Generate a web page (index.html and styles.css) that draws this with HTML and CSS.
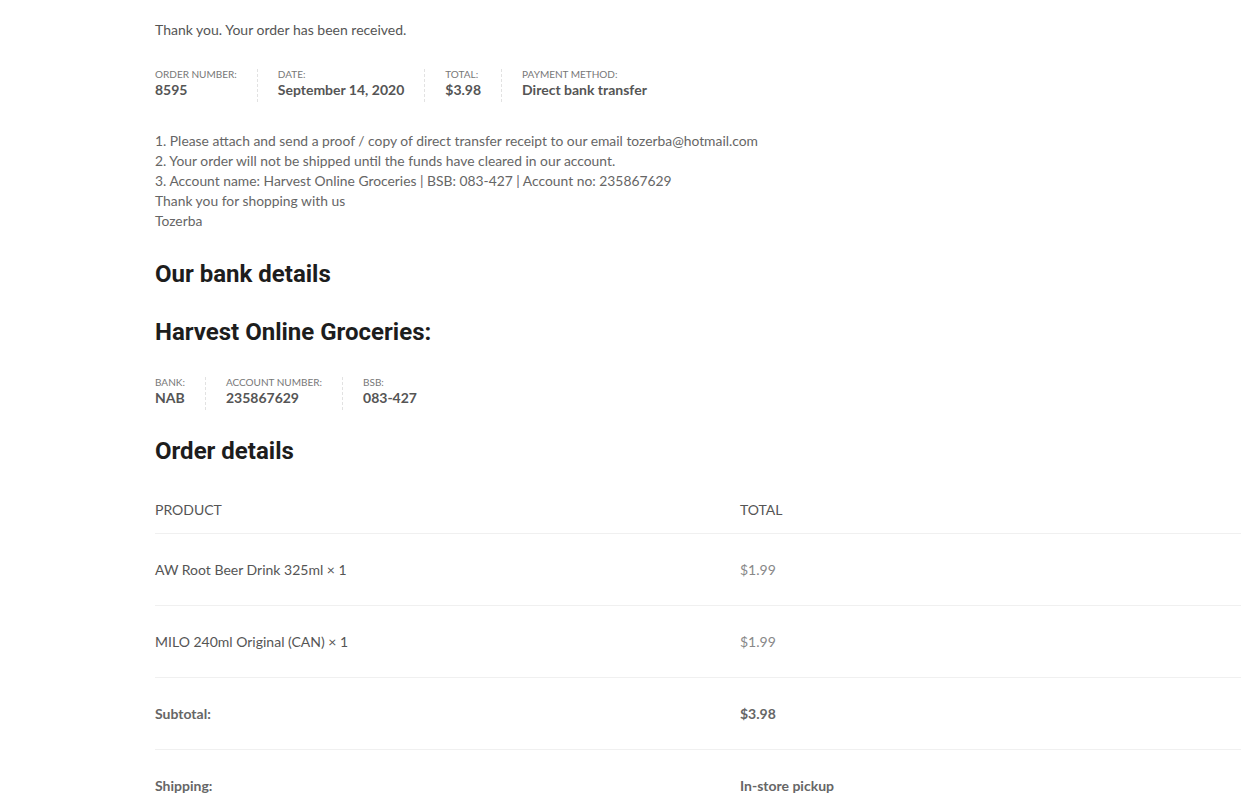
FILE: index.html
```html
<!DOCTYPE html>
<html lang="en">
<head>
    <meta charset="UTF-8">
    <meta name="viewport" content="width=device-width, initial-scale=1.0">
    <title>Order received</title>
    <link rel="stylesheet" href="styles.css">
</head>
<body>
    <div class="order-page">
        <p class="thanks">Thank you. Your order has been received.</p>

        <ul class="overview">
            <li>
                <span class="label">Order number:</span>
                <strong>8595</strong>
            </li>
            <li>
                <span class="label">Date:</span>
                <strong>September 14, 2020</strong>
            </li>
            <li>
                <span class="label">Total:</span>
                <strong>$3.98</strong>
            </li>
            <li>
                <span class="label">Payment method:</span>
                <strong>Direct bank transfer</strong>
            </li>
        </ul>

        <div class="instructions">
            1. Please attach and send a proof / copy of direct transfer receipt to our email tozerba@hotmail.com<br/>
            2. Your order will not be shipped until the funds have cleared in our account.<br/>
            3. Account name: Harvest Online Groceries | BSB: 083-427 | Account no: 235867629<br/>
            Thank you for shopping with us<br/>
            Tozerba
        </div>

        <h2 class="bank-title">Our bank details</h2>
        <h3 class="bank-name">Harvest Online Groceries:</h3>

        <ul class="overview bank">
            <li>
                <span class="label">Bank:</span>
                <strong>NAB</strong>
            </li>
            <li>
                <span class="label">Account number:</span>
                <strong>235867629</strong>
            </li>
            <li>
                <span class="label">BSB:</span>
                <strong>083-427</strong>
            </li>
        </ul>

        <h2 class="details-title">Order details</h2>

        <table class="order-table">
            <thead>
                <tr>
                    <th class="col-product">Product</th>
                    <th class="col-total">Total</th>
                </tr>
            </thead>
            <tbody>
                <tr>
                    <td>AW Root Beer Drink 325ml &times; 1</td>
                    <td class="price">$1.99</td>
                </tr>
                <tr>
                    <td>MILO 240ml Original (CAN) &times; 1</td>
                    <td class="price">$1.99</td>
                </tr>
            </tbody>
            <tfoot>
                <tr>
                    <th>Subtotal:</th>
                    <td class="strong">$3.98</td>
                </tr>
                <tr>
                    <th>Shipping:</th>
                    <td class="strong">In-store pickup</td>
                </tr>
            </tfoot>
        </table>
    </div>
</body>
</html>
```

FILE: styles.css
```css
html, body {
    overflow: hidden;
}
body {
    margin: 0;
    background: #fff;
    font-family: Lato, 'Open Sans', sans-serif;
    color: #555;
}
.order-page {
    padding: 20px 0 0 155px;
    width: 1086px;
}
.thanks {
    margin: 0;
    font-size: 14px;
    line-height: 20px;
    color: #555;
}

.overview {
    list-style: none;
    margin: 29px 0 0;
    padding: 0;
    display: flex;
}
.overview li {
    display: flex;
    flex-direction: column;
    padding: 0 20px;
    border-right: 1px dashed #e2e2e2;
}
.overview li:first-child {
    padding-left: 0;
}
.overview li:last-child {
    border-right: 0;
}
.overview .label {
    font-size: 10px;
    line-height: 11px;
    text-transform: uppercase;
    color: #777;
}
.overview strong {
    font-size: 14px;
    line-height: 20px;
    font-weight: bold;
    color: #555;
    padding-bottom: 2px;
}

.instructions {
    margin-top: 29px;
    font-size: 13.85px;
    line-height: 20px;
    color: #666;
}

h2, h3 {
    font-family: Roboto, 'Liberation Sans', sans-serif;
    font-weight: bold;
    color: #1d1d1d;
    font-size: 24px;
    line-height: 28px;
    margin: 0;
}
.bank-title {
    margin-top: 29px;
}
.bank-name {
    margin-top: 30px;
}
.overview.bank {
    margin-top: 31px;
}
.details-title {
    margin-top: 27px;
}

.order-table {
    margin-top: 21px;
    width: 100%;
    border-collapse: collapse;
    font-size: 14px;
}
.order-table th,
.order-table td {
    text-align: left;
    line-height: 20px;
    padding: 26px 0 25px;
    border-bottom: 1px solid #f0f0f0;
    vertical-align: middle;
}
.order-table thead th {
    font-weight: normal;
    text-transform: uppercase;
    color: #555;
    padding: 14px 0 13px;
}
.order-table .col-product {
    width: 585px;
}
.order-table td {
    color: #555;
}
.order-table .price {
    color: #888;
}
.order-table tfoot th,
.order-table .strong {
    font-weight: bold;
    color: #666;
}
```
